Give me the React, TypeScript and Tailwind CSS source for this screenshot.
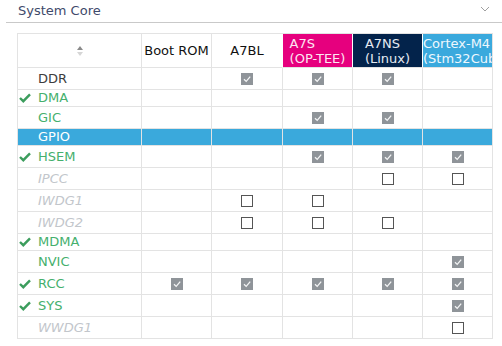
import React from "react";

type Cell = boolean | null;

type Row = {
  name: string;
  kind: "plain" | "green" | "off" | "selected";
  done?: boolean;
  cells: Cell[];
};

const ROWS: Row[] = [
  { name: "DDR", kind: "plain", cells: [null, true, true, true, null] },
  { name: "DMA", kind: "green", done: true, cells: [null, null, null, null, null] },
  { name: "GIC", kind: "green", cells: [null, null, true, true, null] },
  { name: "GPIO", kind: "selected", cells: [null, null, null, null, null] },
  { name: "HSEM", kind: "green", done: true, cells: [null, null, true, true, true] },
  { name: "IPCC", kind: "off", cells: [null, null, null, false, false] },
  { name: "IWDG1", kind: "off", cells: [null, false, false, null, null] },
  { name: "IWDG2", kind: "off", cells: [null, false, false, false, null] },
  { name: "MDMA", kind: "green", done: true, cells: [null, null, null, null, null] },
  { name: "NVIC", kind: "green", cells: [null, null, null, null, true] },
  { name: "RCC", kind: "green", done: true, cells: [true, true, true, true, true] },
  { name: "SYS", kind: "green", done: true, cells: [null, null, null, null, true] },
  { name: "WWDG1", kind: "off", cells: [null, null, null, null, false] },
];

function Box({ checked }: { checked: boolean }) {
  if (checked) {
    return (
      <span className="flex h-[12px] w-[12px] items-center justify-center bg-[#8f9499]">
        <svg width="10" height="10" viewBox="0 0 10 10">
          <path d="M2 5.2 L4.2 7.4 L8.2 2.6" fill="none" stroke="#f4f5f6" strokeWidth="1.3" />
        </svg>
      </span>
    );
  }
  return <span className="block h-[12px] w-[12px] border border-[#555] bg-white" />;
}

function DoneIcon() {
  return (
    <svg width="12" height="10" viewBox="0 0 12 10">
      <path d="M1 5 L4.3 8.2 L11 1.3" fill="none" stroke="#3c9d5d" strokeWidth="2.4" />
    </svg>
  );
}

function CoreHead({ top, bottom, cls }: { top: string; bottom: string; cls: string }) {
  return (
    <div className={`flex min-w-0 items-center overflow-hidden whitespace-nowrap border-l border-b border-l-white border-b-[#e3e3e3] text-center leading-[15px] ${cls}`}>
      <div className="w-full">
        <span className="inline-block text-left">
          {top}
          <br />
          {bottom}
        </span>
      </div>
    </div>
  );
}

export default function App() {
  return (
    <div className="h-[346px] w-[502px] overflow-hidden bg-white font-['DejaVu_Sans',sans-serif] text-[13px]">
      <div className="ml-[6px] flex h-[23px] items-center justify-between border-b border-[#c9c9c9] pl-[12px] pr-[12px]">
        <span className="text-[#3f4a6b]">System Core</span>
        <svg width="10" height="7" viewBox="0 0 10 7" className="mb-[3px]">
          <path d="M1 1 L5 5 L9 1" fill="none" stroke="#a0a0a0" strokeWidth="1" />
        </svg>
      </div>

      <div className="mt-[10px] pl-[17px]">
        <div className="grid w-fit grid-cols-[124px_70px_71px_70px_70px_70px] border-t border-r border-[#e3e3e3]">
          {/* header */}
          <div className="flex h-[34px] items-center justify-center border-l border-b border-[#e3e3e3]">
            <div className="flex flex-col items-center gap-[2px]">
              <span className="h-0 w-0 border-x-[3px] border-b-[4px] border-x-transparent border-b-[#8a8a8a]" />
              <span className="h-0 w-0 border-x-[3px] border-t-[4px] border-x-transparent border-t-[#d6d6d6]" />
            </div>
          </div>
          <div className="flex items-center justify-center border-l border-b border-[#e3e3e3] text-[#111]">Boot ROM</div>
          <div className="flex items-center justify-center border-l border-b border-[#e3e3e3] text-[#111]">A7BL</div>
          <CoreHead top="A7S" bottom="(OP-TEE)" cls="bg-[#e6007e] text-[#fde6f1]" />
          <CoreHead top="A7NS" bottom="(Linux)" cls="bg-[#03234b] text-[#e6ebf2]" />
          <CoreHead top="Cortex-M4" bottom="(Stm32CubeProgrammer)" cls="bg-[#3aa9dd] text-[#eef8fd]" />

          {ROWS.map((row) => {
            const tall = row.cells.some((c) => c !== null);
            const h = tall ? "h-[22px]" : "h-[17px]";
            const bg = row.kind === "selected" ? "bg-[#3aa9dc]" : "";
            const labelCls =
              row.kind === "plain"
                ? "text-[#3d3d3d]"
                : row.kind === "green"
                ? "text-[#45b06d]"
                : row.kind === "off"
                ? "italic text-[#c2c6cb]"
                : "text-white";
            return (
              <React.Fragment key={row.name}>
                <div className={`flex items-center border-l border-b border-[#e3e3e3] pl-px ${h} ${bg}`}>
                  <span className="flex w-[19px] items-center">{row.done && <DoneIcon />}</span>
                  <span className={labelCls}>{row.name}</span>
                </div>
                {row.cells.map((c, i) => (
                  <div
                    key={i}
                    className={`flex items-center justify-center border-l border-b border-[#e3e3e3] ${h} ${bg}`}
                  >
                    {c !== null && <Box checked={c} />}
                  </div>
                ))}
              </React.Fragment>
            );
          })}
        </div>
      </div>
    </div>
  );
}
